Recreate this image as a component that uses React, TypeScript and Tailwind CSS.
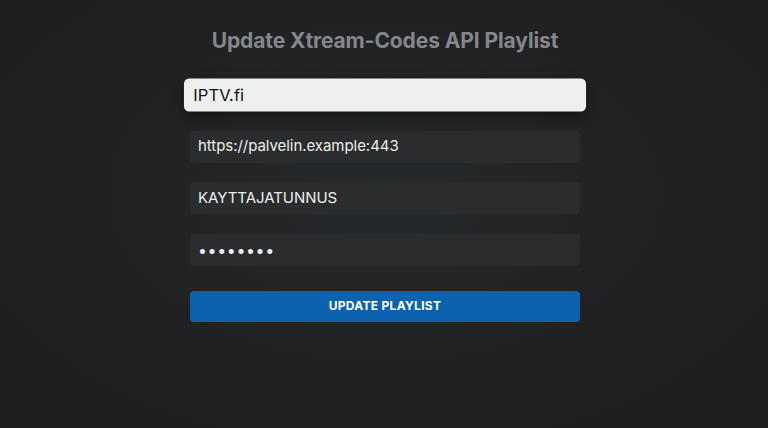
export default function App() {
  const fields = ["https://palvelin.example:443", "KAYTTAJATUNNUS", "••••••••"];

  return (
    <div
      className="w-[768px] h-[428px] overflow-hidden bg-[radial-gradient(ellipse_at_50%_45%,#26292b_0%,#1f2123_55%,#1c1e1f_100%)]"
      style={{ fontFamily: "Inter, 'Noto Sans', sans-serif" }}
    >
      <div className="w-[390px] mx-auto translate-x-[1px] pt-[28px] flex flex-col">
        <h1 className="text-center text-[21px] leading-[26px] font-bold text-[#85888a] tracking-[-0.1px]">
          Update Xtream-Codes API Playlist
        </h1>

        <div className="mt-[25px] flex flex-col gap-[19.5px]">
          {/* focused field */}
          <div className="h-[32px] scale-x-[1.031] scale-y-[1.03] rounded-[5px] bg-[#eeefef] shadow-[0_4px_12px_rgba(0,0,0,0.45)] flex items-center px-[9px]">
            <span className="text-[16px] text-[#111] tracking-[0.1px]">IPTV.fi</span>
          </div>

          {fields.map((f) => (
            <div
              key={f}
              className="h-[32px] rounded-[4px] bg-[#2a2c2e] flex items-center px-[8px]"
            >
              <span
                className={
                  f.startsWith("•")
                    ? "text-[16px] text-[#f2f2f2] tracking-[0.6px]"
                    : "text-[15px] text-[#eeeeee] tracking-[-0.05px]"
                }
              >
                {f}
              </span>
            </div>
          ))}
        </div>

        <button className="mt-[25px] h-[31px] rounded-[4px] bg-[#0b63b0] text-white text-[12px] font-bold tracking-[0.3px]">
          UPDATE PLAYLIST
        </button>
      </div>
    </div>
  );
}
